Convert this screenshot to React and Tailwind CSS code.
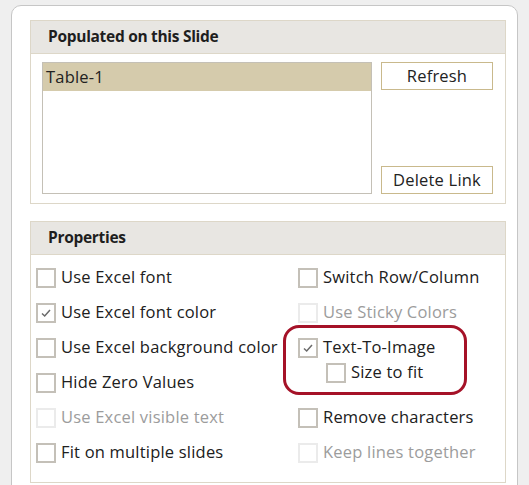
import React from "react";

const font = { fontFamily: '"Open Sans", "Noto Sans", sans-serif' };

function Box({ checked, disabled }) {
  return (
    <span
      className={`flex h-[20px] w-[20px] shrink-0 items-center justify-center border-2 bg-white ${
        disabled ? "border-[#ebebeb]" : "border-[#c4c0b8]"
      }`}
    >
      {checked && (
        <svg width="14" height="14" viewBox="0 0 14 14">
          <path d="M3 7.5 L5.7 10 L11 4" fill="none" stroke="#6a6a6a" strokeWidth="1.5" />
        </svg>
      )}
    </span>
  );
}

function Check({ label, checked, disabled, className = "" }) {
  return (
    <div className={`flex items-center gap-[5px] ${className}`}>
      <Box checked={checked} disabled={disabled} />
      <span
        className={`text-[16.5px] leading-none tracking-[0.2px] ${disabled ? "text-[#9c9c9c]" : "text-[#202020]"}`}
      >
        {label}
      </span>
    </div>
  );
}

function Group({ title, children, className = "" }) {
  return (
    <div className={`w-[476px] border border-[#ddd7c8] ${className}`}>
      <div className="flex h-[33px] items-center border-b border-[#ddd7c8] bg-[#e8e6e2] pl-[17px]">
        <span className="text-[15.5px] font-bold tracking-[-0.3px] text-[#1e1e1e]">{title}</span>
      </div>
      {children}
    </div>
  );
}

export default function App() {
  return (
    <div className="h-[485px] w-[529px] overflow-hidden bg-[#efefef] pl-[11px] pt-[5px]" style={font}>
      <div className="h-[500px] w-[507px] rounded-t-[10px] border border-[#c6c6c6] bg-white pl-[18px] pt-[14px]">
        <Group title="Populated on this Slide">
          <div className="flex px-[11px] pb-[9px] pt-[8px]">
            <div className="h-[132px] w-[330px] border border-[#c4c0b6] bg-white">
              <div className="flex h-[28px] items-center bg-[#d5cbac] pl-[3px] text-[16.5px] tracking-[0.2px] text-[#222]">
                Table-1
              </div>
            </div>
            <div className="ml-[9px] flex flex-col justify-between">
              <button className="h-[28px] w-[112px] border border-[#c9b98c] bg-white pt-[1px] text-[16.5px] tracking-[0.2px] text-[#222]">
                Refresh
              </button>
              <button className="h-[28px] w-[112px] border border-[#c9b98c] bg-white pt-[1px] text-[16.5px] tracking-[0.2px] text-[#222]">
                Delete Link
              </button>
            </div>
          </div>
        </Group>
        <Group title="Properties" className="mt-[17px]">
          <div className="relative flex pb-[12px] pt-[5px]">
            <div className="flex w-[267px] flex-col pl-[5px]">
              <Check className="h-[35px]" label="Use Excel font" />
              <Check className="h-[35px]" label="Use Excel font color" checked />
              <Check className="h-[35px]" label="Use Excel background color" />
              <Check className="h-[35px]" label="Hide Zero Values" />
              <Check className="h-[35px]" label="Use Excel visible text" disabled />
              <Check className="h-[35px]" label="Fit on multiple slides" />
            </div>
            <div className="flex flex-col">
              <Check className="h-[35px]" label="Switch Row/Column" />
              <Check className="h-[35px]" label="Use Sticky Colors" disabled />
              <div className="flex h-[70px] flex-col pt-[5px]">
                <Check className="h-[25px]" label="Text-To-Image" checked />
                <Check className="ml-[28px] h-[25px]" label="Size to fit" />
              </div>
              <Check className="h-[35px]" label="Remove characters" />
              <Check className="h-[35px]" label="Keep lines together" disabled />
            </div>
            <div className="pointer-events-none absolute left-[252px] top-[70px] h-[70px] w-[184px] rounded-[16px] border-[3px] border-[#a51228]" />
          </div>
        </Group>
      </div>
    </div>
  );
}
